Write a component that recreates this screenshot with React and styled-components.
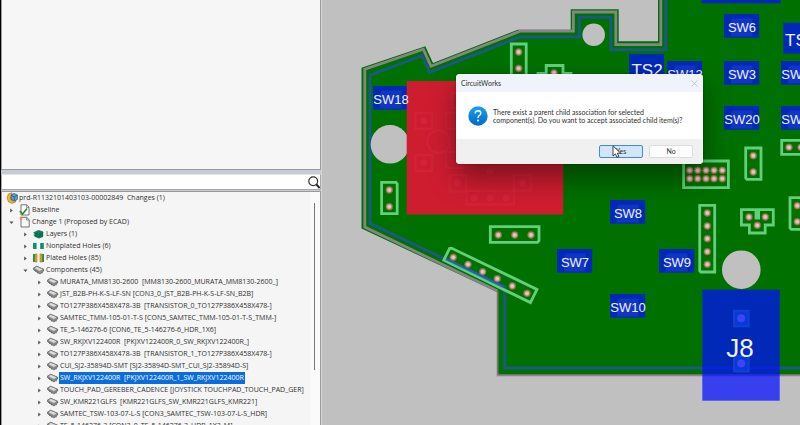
import React, { useState } from 'react'
import styled, { createGlobalStyle } from 'styled-components';

const changes = [
    { depth: 1, icon: 'baseline', label: 'Baseline' },
    { depth: 1, icon: 'change', label: 'Change 1 (Proposed by ECAD)', open: true },
    { depth: 2, icon: 'layers', label: 'Layers (1)' },
    { depth: 2, icon: 'nonplated', label: 'Nonplated Holes (6)' },
    { depth: 2, icon: 'plated', label: 'Plated Holes (85)' },
    { depth: 2, icon: 'component', label: 'Components (45)', open: true },
    { depth: 3, icon: 'component', label: 'MURATA_MM8130-2600  [MM8130-2600_MURATA_MM8130-2600_]' },
    { depth: 3, icon: 'component', label: 'JST_B2B-PH-K-S-LF-SN [CON3_0_JST_B2B-PH-K-S-LF-SN_B2B]' },
    { depth: 3, icon: 'component', label: 'TO127P386X458X478-3B  [TRANSISTOR_0_TO127P386X458X478-]' },
    { depth: 3, icon: 'component', label: 'SAMTEC_TMM-105-01-T-S [CON5_SAMTEC_TMM-105-01-T-S_TMM-]' },
    { depth: 3, icon: 'component', label: 'TE_5-146276-6 [CON6_TE_5-146276-6_HDR_1X6]' },
    { depth: 3, icon: 'component', label: 'SW_RKJXV122400R  [PKJXV122400R_0_SW_RKJXV122400R_]' },
    { depth: 3, icon: 'component', label: 'TO127P386X458X478-3B  [TRANSISTOR_1_TO127P386X458X478-]' },
    { depth: 3, icon: 'component', label: 'CUI_SJ2-35894D-SMT [SJ2-35894D-SMT_CUI_SJ2-35894D-S]' },
    { depth: 3, icon: 'component', label: 'SW_RKJXV122400R  [PKJXV122400R_1_SW_RKJXV122400R' },
    { depth: 3, icon: 'component', label: 'TOUCH_PAD_GEREBER_CADENCE [JOYSTICK TOUCHPAD_TOUCH_PAD_GER]' },
    { depth: 3, icon: 'component', label: 'SW_KMR221GLFS  [KMR221GLFS_SW_KMR221GLFS_KMR221]' },
    { depth: 3, icon: 'component', label: 'SAMTEC_TSW-103-07-L-S [CON3_SAMTEC_TSW-103-07-L-S_HDR]' },
    { depth: 3, icon: 'component', label: 'TE_5-146276-3 [CON3_0_TE_5-146276-3_HDR_1X3_M]' },
]

const switches = [
    { x: 373, y: 86, name: 'SW18' },
    { x: 724, y: 14, name: 'SW6' },
    { x: 724, y: 61, name: 'SW3' },
    { x: 724, y: 106, name: 'SW20' },
    { x: 781, y: 61, name: 'SW14' },
    { x: 781, y: 106, name: 'SW15' },
    { x: 667, y: 61, name: 'SW13' },
    { x: 610, y: 200, name: 'SW8' },
    { x: 557, y: 249, name: 'SW7' },
    { x: 659, y: 249, name: 'SW9' },
    { x: 610, y: 294, name: 'SW10' },
]

const headers = [
    { d: 'M511.3 44H526.2V82H511.3Z', pins: [[518.7, 52], [518.7, 68.3]] },
    { d: 'M538 73.3H546.2V65.5H563V73.3H571V90H538Z', pins: [[554, 73]] },
    { d: 'M381.6 182.4H396L397.2 184V213.6H381.6Z', pins: [[389.3, 190], [389.3, 206.7]] },
    { d: 'M490.3 226.6H539V240.8L537.6 242.3H490.3Z', pins: [[498.3, 235], [514.7, 235], [531, 235]] },
    { d: 'M449.6 248.4L451.4 248.1L537 289.4L530.4 302.6L443.8 260.2Z', pins: [[453.3, 257.3], [468, 264.3], [482.7, 271.7], [497.3, 278.7], [512.3, 286], [527, 293.3]] },
    { d: 'M683.6 161H728.4V187.6H683.6Z', pins: [[689.7, 170.3], [697.7, 170.3], [706, 170.3], [714, 170.3], [722.3, 170.3], [689.7, 178.7], [697.7, 178.7], [706, 178.7], [714, 178.7], [722.3, 178.7]] },
    { d: 'M745.7 148H761V179.4H747L745.7 178Z', pins: [[753.3, 155.7], [753.3, 172]] },
    { d: 'M781.7 140.4H815V154.4H781.7Z', pins: [[789, 147.3], [801, 147.3]] },
    { d: 'M699.7 205.4H714.7V272H701L699.7 270.6Z', pins: [[707.3, 213], [707.3, 226], [707.3, 238.7], [707.3, 251.7], [707.3, 264.3]] },
    { d: 'M741.4 209.7H756V218H758.6V209.7H773.3V225H765.2V233H749.4V225H741.4Z', pins: [[749, 217], [765.3, 217], [757.3, 225.3]] },
    { d: 'M790 197.7H815V229.4H791.4L790 228Z', pins: [[797.3, 205.7], [797.3, 221.7]] },
]

const TreeIcon = ({ type }) => {
    if (type === 'baseline') {
        return (
            <Icon viewBox="0 0 12 12">
                <path d="M2 .8H7.6L10 3.2V11H2Z" fill="#fff" stroke="#666" strokeWidth=".9" />
                <path d="M7.4 .8V3.4H10" fill="none" stroke="#666" strokeWidth=".7" />
                <path d="M.8 7L3.6 10L8 4.6" fill="none" stroke="#2f8a1f" strokeWidth="1.6" />
            </Icon>
        )
    }
    if (type === 'change') {
        return (
            <Icon viewBox="0 0 12 12">
                <path d="M2 1.3H7.6L10.2 3.8V11H2Z" fill="#f8f8f8" stroke="#666" strokeWidth=".9" />
                <path d="M7.4 1.3V4H10.2" fill="none" stroke="#666" strokeWidth=".7" />
                <path d="M2 0L2.7 1.5L4.4 2L2.7 2.8L2 4.4L1.3 2.8L0 2L1.3 1.5Z" fill="#e78b35" />
            </Icon>
        )
    }
    if (type === 'layers') {
        return (
            <Icon viewBox="0 0 12 12">
                <path d="M1.2 4L5.6 2L10 3.6V9L6 10.4L1.6 8.8Z" fill="#0c8060" />
                <path d="M.4 4.6L5.8 6.4L10.6 4.8M.6 7L5.8 8.6L10.6 7" fill="none" stroke="#07583f" strokeWidth=".8" />
            </Icon>
        )
    }
    if (type === 'nonplated' || type === 'plated') {
        return (
            <Icon viewBox="0 0 12 12">
                <path d={type === 'plated' ? 'M0 2H2V10H0ZM9 2H11V10H9Z' : 'M0 3H3.6V9H0ZM7.2 3H10.8V9H7.2Z'} fill="#12906c" />
                {type === 'plated' && <path d="M1.8 2H4V10H1.8ZM7 2H9.2V10H7Z" fill="#f0a818" stroke="#8a6415" strokeWidth=".5" />}
            </Icon>
        )
    }
    return (
        <Icon viewBox="0 0 12 12">
            <path d="M.4 4.2L3.6 2.2L10.6 5.2V7L7 10L.8 6Z" fill="#8a8a8a" stroke="#555" strokeWidth=".7" />
            <path d="M.8 4.2L3.8 2.6L10.2 5.2L6.8 7.4Z" fill="#dedede" stroke="#666" strokeWidth=".5" />
            <path d="M2.6 6.4V8M4.4 7.6V9.4M9.2 8V9.4" stroke="#666" strokeWidth=".8" />
        </Icon>
    )
}

const Pin = ({ x, y }) => (
    <g>
        <circle cx={x} cy={y} r="3.4" fill="#c98b6b" stroke="#7e6a3c" strokeWidth=".8" />
        <circle cx={x} cy={y} r="1.9" fill="#d0cccf" />
    </g>
)

const Board = () => (
    <BoardSvg viewBox="322 0 478 425" preserveAspectRatio="xMinYMin slice" role="img" aria-label="Board layout">
        <path
            d="M361.5 67.7L425.3 46.3L433 63L519 29.3H570.7V9.3H618.7V41.3H658V-5H805V376H497V292L361.5 228.5Z"
            fill="#007000"
        />
        <path d="M518 29.5H570.7M497 292V375.8H805" fill="none" stroke="#c08abf" strokeWidth="1.2" />
        <path
            d="M497.5 291L364.8 227V69.3L423.3 49.2L431 66.3L520 31.2H573.4V12H615.8V44.7H660.8V-5"
            fill="none" stroke="#858585" strokeWidth="2.8"
        />
        <path d="M498 291V374.6H805" fill="none" stroke="#6f7a6f" strokeWidth="1" />
        <path
            d="M805 368H504.7V287.3L370 223.5V75L422 55.7L429.5 72.3L520 37H579.3V17.3H610.8V49.7H665.8V-5"
            fill="none" stroke="#1a5a80" strokeWidth="3"
        />

        <circle cx="390" cy="144.3" r="19.3" fill="#c0c0c0" />
        <circle cx="593.7" cy="34.7" r="11.3" fill="#c0c0c0" />
        <circle cx="741.3" cy="269.7" r="19.3" fill="#c0c0c0" />

        {headers.map(h => (
            <g key={h.d}>
                <path d={h.d} fill="none" stroke="#68d886" strokeOpacity=".92" strokeWidth="2.8" />
                {h.pins.map(([x, y]) => <Pin key={x + '-' + y} x={x} y={y} />)}
            </g>
        ))}
        <path d="M446 259L504 287" stroke="#2a64c4" strokeOpacity=".6" strokeWidth="3" />

        <rect x="701.7" y="-10" width="79.3" height="13.3" fill="#0029b8" />
        <rect x="629" y="54" width="35" height="31" fill="#0029b8" />
        <rect x="783.3" y="22.7" width="35" height="31" fill="#0029b8" />
        {switches.map(s => (
            <g key={s.x + '-' + s.y}>
                <rect x={s.x} y={s.y} width="35.2" height="23.7" fill="#0029b8" />
                <path
                    d={`M${s.x + 9} ${s.y + 4.5}H${s.x + 28.5}V${s.y + 22.5}H${s.x + 7}V${s.y + 7}Z`}
                    fill="#1136c4"
                />
            </g>
        ))}

        <rect x="406.7" y="81" width="156.6" height="133.5" fill="#cf1d30" />
        <g fill="none" stroke="#dc3049" strokeWidth="2.4" strokeOpacity=".3">
            <path d="M415.5 113H432V129H415.5ZM415.5 155H432V171H415.5ZM449.5 175H466V191.5H449.5ZM514 175H531V190.5H514Z" />
            <path d="M466.5 191H514V204.5H466.5ZM452 93H480V108H452ZM446 113H462V129H446ZM446 152H462V168H446Z" />
            <circle cx="438.5" cy="141.7" r="11.3" />
        </g>
        <g fill="#e0254a" fillOpacity=".5">
            {[[424, 120.7], [424, 162.7], [457.5, 182.7], [522.5, 182.7], [474, 198], [490, 198], [506, 198], [490, 171.5]].map(([x, y]) => (
                <circle key={x + '-' + y} cx={x} cy={y} r="3.4" />
            ))}
        </g>

        <rect x="702.3" y="289.7" width="77.4" height="111" fill="rgba(0, 14, 255, .72)" />
        {[318.3, 363.5].map(y => (
            <g key={y}>
                <rect x="734" y={y - 7.5} width="14.6" height="15.5" fill="#0a3ce0" fillOpacity=".8" stroke="#1440d0" strokeWidth="2" />
                <circle cx="741.2" cy={y} r="4" fill="#3a46f2" />
            </g>
        ))}

        {switches.map(s => (
            <BoardText key={s.x + '-' + s.y} $size={13} x={s.x + 18} y={s.y + 18} textAnchor="middle">{s.name}</BoardText>
        ))}
        <BoardText $size={17} x="647" y="76" textAnchor="middle">TS2</BoardText>
        <BoardText $size={17} x="785" y="46">TS1</BoardText>
        <BoardText $size={26} x="740" y="357" textAnchor="middle">J8</BoardText>
    </BoardSvg>
)

const ConfirmDialog = () => (
    <Dialog role="dialog" aria-labelledby="dialog-title">
        <DialogTitle>
            <span id="dialog-title">CircuitWorks</span>
            <CloseButton type="button" aria-label="Close">
                <svg width="7" height="7" viewBox="0 0 7 7">
                    <path d="M.5 .5L6.5 6.5M6.5 .5L.5 6.5" stroke="#b9bbc2" strokeWidth=".8" />
                </svg>
            </CloseButton>
        </DialogTitle>
        <DialogBody>
            <QuestionIcon viewBox="0 0 20 20">
                <defs>
                    <linearGradient id="ask" x1="0" y1="0" x2="0" y2="1">
                        <stop offset="0" stopColor="#18a0ec" />
                        <stop offset="1" stopColor="#0668cc" />
                    </linearGradient>
                </defs>
                <circle cx="10" cy="10" r="9.7" fill="url(#ask)" />
                <path d="M7.2 7.4Q7.3 4.8 10 4.8Q12.8 4.8 12.8 7.2Q12.8 8.6 11.3 9.5Q10 10.4 10 12" fill="none" stroke="#fff" strokeWidth="1.4" />
                <circle cx="10" cy="14.5" r="1" fill="#fff" />
            </QuestionIcon>
            <Message>
                There exist a parent child association for selected<br />
                component(s). Do you want to accept associated child item(s)?
            </Message>
        </DialogBody>
        <DialogFooter>
            <DialogButton type="button" $active>Yes</DialogButton>
            <DialogButton type="button">No</DialogButton>
        </DialogFooter>
        <Cursor viewBox="0 0 10 14">
            <path d="M1 .8V11L3.4 8.9L5 12.4L6.9 11.5L5.3 8.2H8.6Z" fill="#fff" stroke="#333" strokeWidth=".9" />
        </Cursor>
    </Dialog>
)

const App = () => {
    const [selected, setSelected] = useState(14);

    return (
        <Page>
            <GlobalStyle />
            <SidePanel>
                <PreviewPane />
                <SearchBar>
                    <SearchInput type="text" aria-label="Search changes" />
                    <SearchButton type="button" aria-label="Search">
                        <svg width="12" height="13" viewBox="0 0 12 13">
                            <circle cx="5.2" cy="5.2" r="4.4" fill="none" stroke="#333" strokeWidth="1.2" />
                            <path d="M8.2 8.2L11.6 12" stroke="#222" strokeWidth="2" />
                        </svg>
                    </SearchButton>
                </SearchBar>
                <TreePane>
                    <Tree>
                        <RootRow>
                            <Icon viewBox="0 0 12 12">
                                <path d="M6 .8L2.4 2L1 6L2.6 10L6 11.4L9.6 10V8L6 9L4.4 6.4L6 3Z" fill="#f3b62b" stroke="#9a6a12" strokeWidth=".6" />
                                <path d="M5 3.2L8 1.4L11.4 3V7.4L8.4 9L5 7.4Z" fill="#5b9fd0" stroke="#24567f" strokeWidth=".7" />
                                <path d="M5 3.4L8.3 4.9L11.3 3.2M8.3 4.9V8.8" fill="none" stroke="#24567f" strokeWidth=".7" />
                            </Icon>
                            <Label>prd-R1132101403103-00002849  Changes (1)</Label>
                        </RootRow>
                        {changes.map((item, i) => (
                            <Row key={i} $depth={item.depth}>
                                <Toggle type="button" aria-label={item.open ? 'Collapse' : 'Expand'}>
                                    <svg width="5" height="5" viewBox="0 0 5 5">
                                        <path d={item.open ? 'M.4 1.4H4.6L2.5 4Z' : 'M1.2 .4L3.8 2.5L1.2 4.6Z'} fill="#555" />
                                    </svg>
                                </Toggle>
                                <TreeIcon type={item.icon} />
                                <Label $selected={i === selected} onClick={() => setSelected(i)}>{item.label}</Label>
                            </Row>
                        ))}
                    </Tree>
                    <ScrollTrack>
                        <ScrollThumb />
                    </ScrollTrack>
                </TreePane>
            </SidePanel>
            <Canvas>
                <Board />
                <ConfirmDialog />
            </Canvas>
        </Page>
    )
}


const GlobalStyle = createGlobalStyle`
    * {
        box-sizing: border-box;
    }

    body {
        margin: 0;
        background: #c0c0c0;
        color: #303030;
        font-family: 'Open Sans', 'Noto Sans', sans-serif;
        font-size: 7px;
        line-height: 12px;
    }

    button, input {
        font: inherit;
        color: inherit;
    }
`;

const Page = styled.div`
    display: flex;
    height: 100vh;
    overflow: hidden;
`;

const SidePanel = styled.aside`
    display: flex;
    flex-direction: column;
    flex: 0 0 322px;
    min-height: 0;
    border-left: 1px solid #000;
    border-right: 1px solid #d6d6d6;
    background: #c9ccd4;
`;

const PreviewPane = styled.div`
    flex: 8 0 0;
    border: 1px solid #9a9a9a;
    border-top: 0;
    background: #f6f6f6;
`;

const SearchBar = styled.div`
    display: flex;
    align-items: center;
    height: 16px;
    margin-top: 4px;
    border: 1px solid #a8a8a8;
    border-top-color: #e4e4e4;
    background: #fff;
`;

const SearchInput = styled.input`
    flex: 1;
    min-width: 0;
    height: 12px;
    padding: 0 4px;
    border: 0;
    outline: 0;
    background: transparent;
`;

const SearchButton = styled.button`
    display: flex;
    padding: 0;
    border: 0;
    background: transparent;
`;

const TreePane = styled.div`
    display: flex;
    flex: 11 0 0;
    min-height: 0;
    margin-top: 1px;
    overflow: hidden;
    border: 1px solid #9a9a9a;
    border-bottom: 0;
    background: #f5f5f5;
`;

const Tree = styled.ul`
    flex: 1;
    min-width: 0;
    margin: 0;
    padding: 0;
    list-style: none;
`;

const Row = styled.li`
    display: flex;
    align-items: center;
    height: 12px;
    padding-left: ${props => props.$depth * 14 - 7}px;
`;

const RootRow = styled(Row)`
    padding-left: 4px;
`;

const Toggle = styled.button`
    display: flex;
    align-items: center;
    justify-content: center;
    width: 5px;
    margin-right: 5px;
    padding: 0;
    border: 0;
    background: transparent;
`;

const Icon = styled.svg`
    flex: none;
    width: 12px;
    height: 12px;
`;

const Label = styled.span`
    height: 12px;
    padding: 0 1px;
    white-space: pre;
    cursor: default;
    background: ${props => props.$selected ? '#0a6ddb' : 'transparent'};
    color: ${props => props.$selected ? '#fff' : 'inherit'};
`;

const ScrollTrack = styled.div`
    width: 10px;
    padding: 11px 4px 0;
    background: #fafafa;
`;

const ScrollThumb = styled.div`
    width: 1px;
    height: 75%;
    background: #777;
`;

const Canvas = styled.main`
    position: relative;
    flex: 1;
    min-width: 0;
    background: #c0c0c0;
`;

const BoardSvg = styled.svg`
    display: block;
    width: 100%;
    height: 100%;
`;

const BoardText = styled.text`
    font-family: 'Liberation Sans', Arial, sans-serif;
    font-size: ${props => props.$size}px;
    fill: #f0f2ff;
`;

const Dialog = styled.section`
    position: absolute;
    top: 74px;
    left: 134px;
    width: 247px;
    border-radius: 4px;
    background: #fff;
    font-family: Lato, 'Open Sans', sans-serif;
    box-shadow: 0 14px 28px rgba(0, 0, 0, .4), 0 0 2px rgba(0, 0, 0, .4);
`;

const DialogTitle = styled.header`
    display: flex;
    align-items: center;
    justify-content: space-between;
    height: 18px;
    padding: 0 5px;
    border-radius: 4px 4px 0 0;
    background: #f0f3fa;
`;

const CloseButton = styled.button`
    display: flex;
    padding: 0;
    border: 0;
    background: transparent;
`;

const DialogBody = styled.div`
    display: flex;
    align-items: center;
    gap: 5px;
    height: 47px;
    padding: 0 12px;
`;

const QuestionIcon = styled.svg`
    flex: none;
    width: 20px;
    height: 20px;
`;

const Message = styled.p`
    margin: 0;
    line-height: 8px;
    white-space: nowrap;
`;

const DialogFooter = styled.footer`
    display: flex;
    align-items: center;
    justify-content: flex-end;
    gap: 6px;
    height: 25px;
    padding: 0 10px;
    border-radius: 0 0 4px 4px;
    background: #f0f0f0;
`;

const DialogButton = styled.button`
    width: 44px;
    height: 13px;
    padding: 0;
    border: 1px solid ${props => props.$active ? '#3c8cd8' : '#dcdcdc'};
    border-radius: 2px;
    background: ${props => props.$active ? '#d3e5f8' : '#fdfdfd'};
    line-height: 11px;
`;

const Cursor = styled.svg`
    position: absolute;
    top: 71px;
    left: 156px;
    width: 10px;
    height: 14px;
    pointer-events: none;
`;

export default App;
